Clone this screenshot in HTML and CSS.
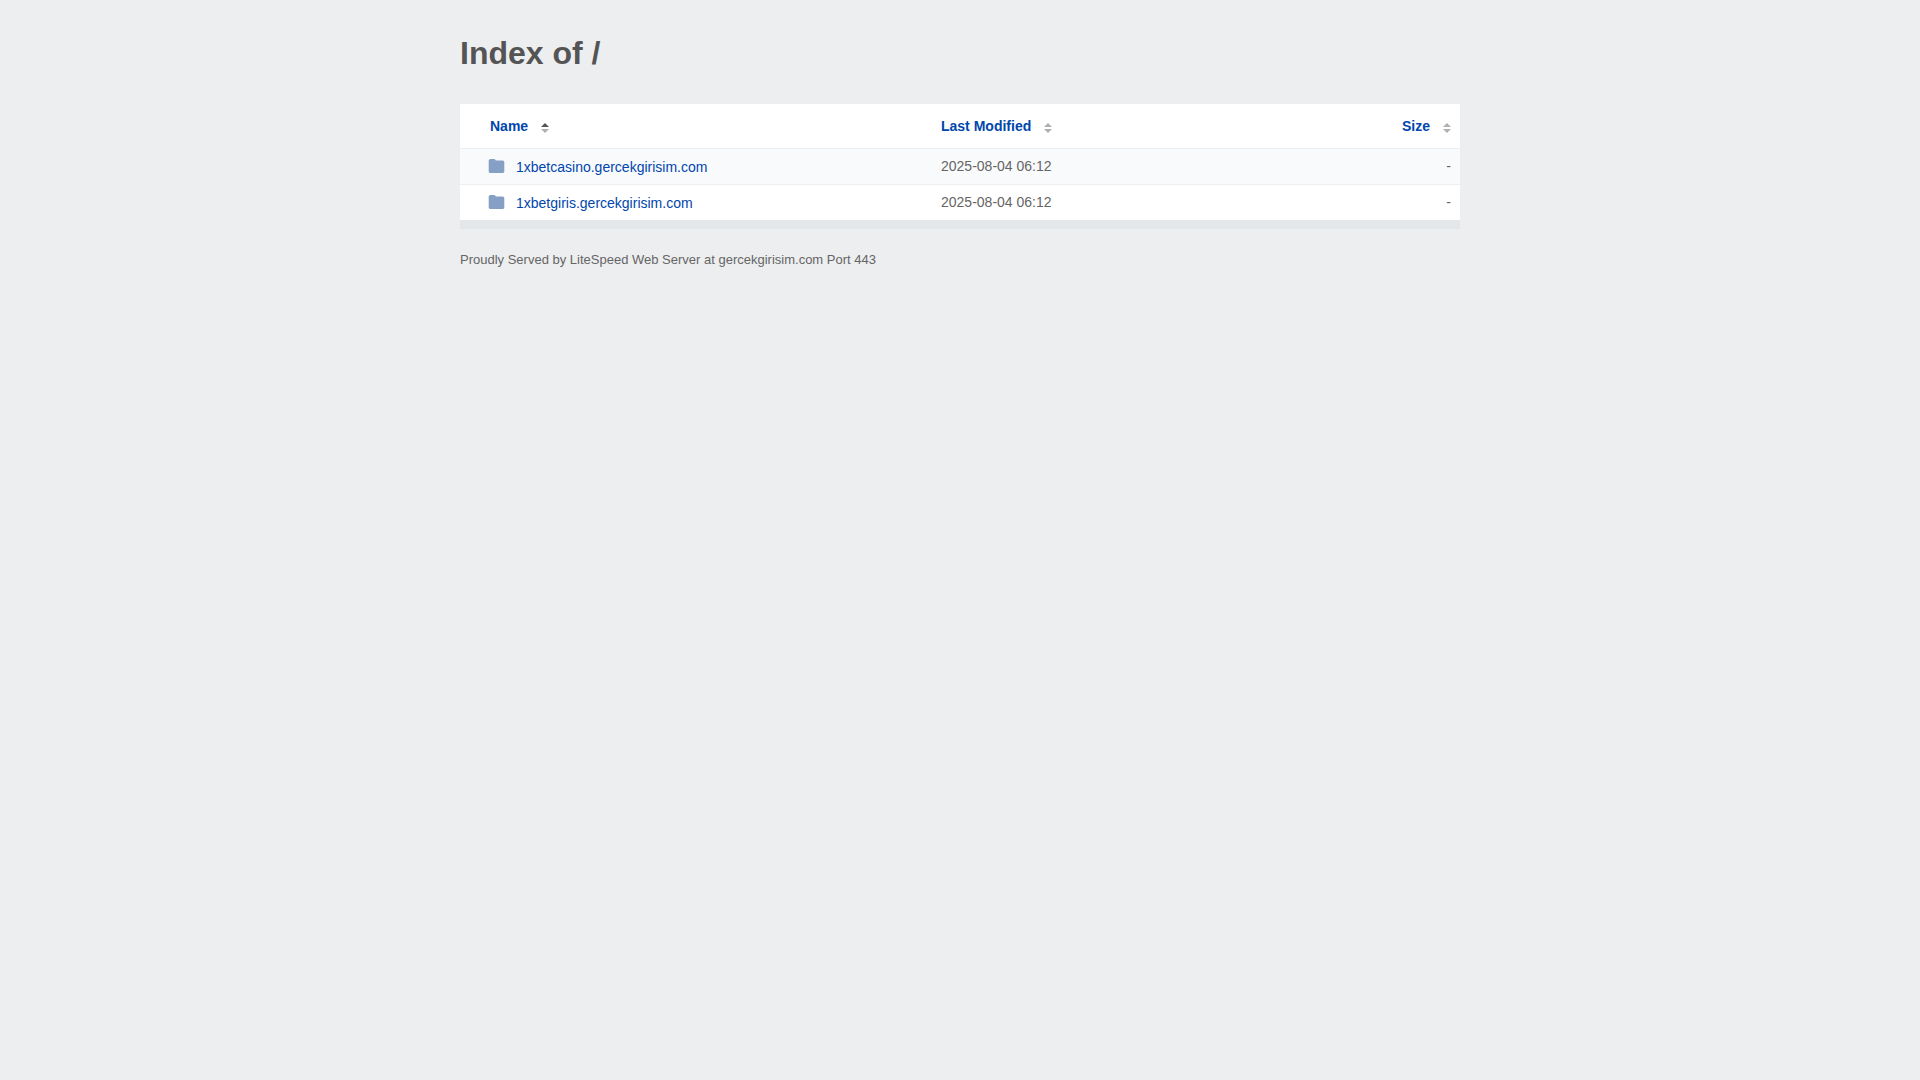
FILE: index.html
```html
<!DOCTYPE html>
<html lang="en">
<head>
	<meta charset="utf-8">
	<meta name="viewport" content="width=device-width, initial-scale=1">
	<title>Index of /</title>
	<link rel="stylesheet" href="styles.css">
</head>
<body>

<svg width="0" height="0" class="defs" aria-hidden="true">
	<symbol id="folder" viewBox="0 0 16 14">
		<path d="M2 0h3.700c.5 0 .8.2 1 .5l.6 1H14c1.100 0 1.800.8 1.800 1.800v8.900c0 1-.8 1.800-1.800 1.800H2c-1 0-1.800-.8-1.800-1.800V1.800C.2.8 1 0 2 0z"/>
	</symbol>
	<symbol id="sort" viewBox="0 0 8 10">
		<path class="up" d="M4 0l4 4H0z"/>
		<path class="down" d="M0 6h8l-4 4z"/>
	</symbol>
</svg>

<div class="content">
	<h1>Index of /</h1>

	<table class="listing">
		<thead>
			<tr>
				<th class="col-name"><a href="#" class="sorted">Name<svg class="sort"><use href="#sort"/></svg></a></th>
				<th class="col-date"><a href="#">Last Modified<svg class="sort"><use href="#sort"/></svg></a></th>
				<th class="col-size"><a href="#">Size<svg class="sort"><use href="#sort"/></svg></a></th>
			</tr>
		</thead>
		<tbody>
			<tr>
				<td class="col-name"><a href="#"><svg class="icon"><use href="#folder"/></svg>1xbetcasino.gercekgirisim.com</a></td>
				<td class="col-date">2025-08-04 06:12</td>
				<td class="col-size">-</td>
			</tr>
			<tr>
				<td class="col-name"><a href="#"><svg class="icon"><use href="#folder"/></svg>1xbetgiris.gercekgirisim.com</a></td>
				<td class="col-date">2025-08-04 06:12</td>
				<td class="col-size">-</td>
			</tr>
		</tbody>
	</table>

	<address>Proudly Served by LiteSpeed Web Server at gercekgirisim.com Port 443</address>
</div>

</body>
</html>
```

FILE: styles.css
```css
body {
	margin: 0;
	padding: 0 20px;
	background-color: #edeef0;
	color: #545454;
	font-family: "Liberation Sans", Arial, sans-serif;
	font-size: 14px;
	line-height: 20px;
}

.defs {
	position: absolute;
}

.content {
	max-width: 1000px;
	margin: 0 auto;
	padding-top: 32px;
}

h1 {
	margin: 0 0 30px;
	font-size: 32px;
	line-height: 42px;
}

a {
	color: #0046ad;
	text-decoration: none;
}

a:hover {
	text-decoration: underline;
}

/* file table */
.listing {
	width: 100%;
	table-layout: fixed;
	border-collapse: separate;
	border-spacing: 0;
	border-bottom: 9px solid #e3e7ea;
	background-color: #fff;
}

th {
	padding: 12px 9px;
	text-align: left;
}

td {
	padding: 7px 9px 8px;
	border-top: 1px solid #edeef0;
	color: #656565;
}

tbody tr:nth-child(odd) {
	background-color: #f9fafc;
}

.col-name {
	width: 47%;
	box-sizing: border-box;
	padding-left: 30px;
}

.col-date {
	padding-left: 11px;
}

.col-size {
	text-align: right;
}

td.col-name {
	padding: 8px 9px 7px 28px;
}

td a {
	display: flex;
	align-items: center;
}

th a {
	display: inline-flex;
	align-items: center;
}

.icon {
	width: 17px;
	height: 14px;
	margin: 0 11px 2px 0;
	fill: #869fc5;
}

.sort {
	width: 8px;
	height: 10px;
	margin: 3px 0 0 13px;
	--up: #b0b0b0;
	--down: #b0b0b0;
}

.sorted .sort {
	--up: #555;
}

.up {
	fill: var(--up);
}

.down {
	fill: var(--down);
}

address {
	margin-top: 21px;
	color: #656565;
	font-size: 13px;
	font-style: normal;
}
```
